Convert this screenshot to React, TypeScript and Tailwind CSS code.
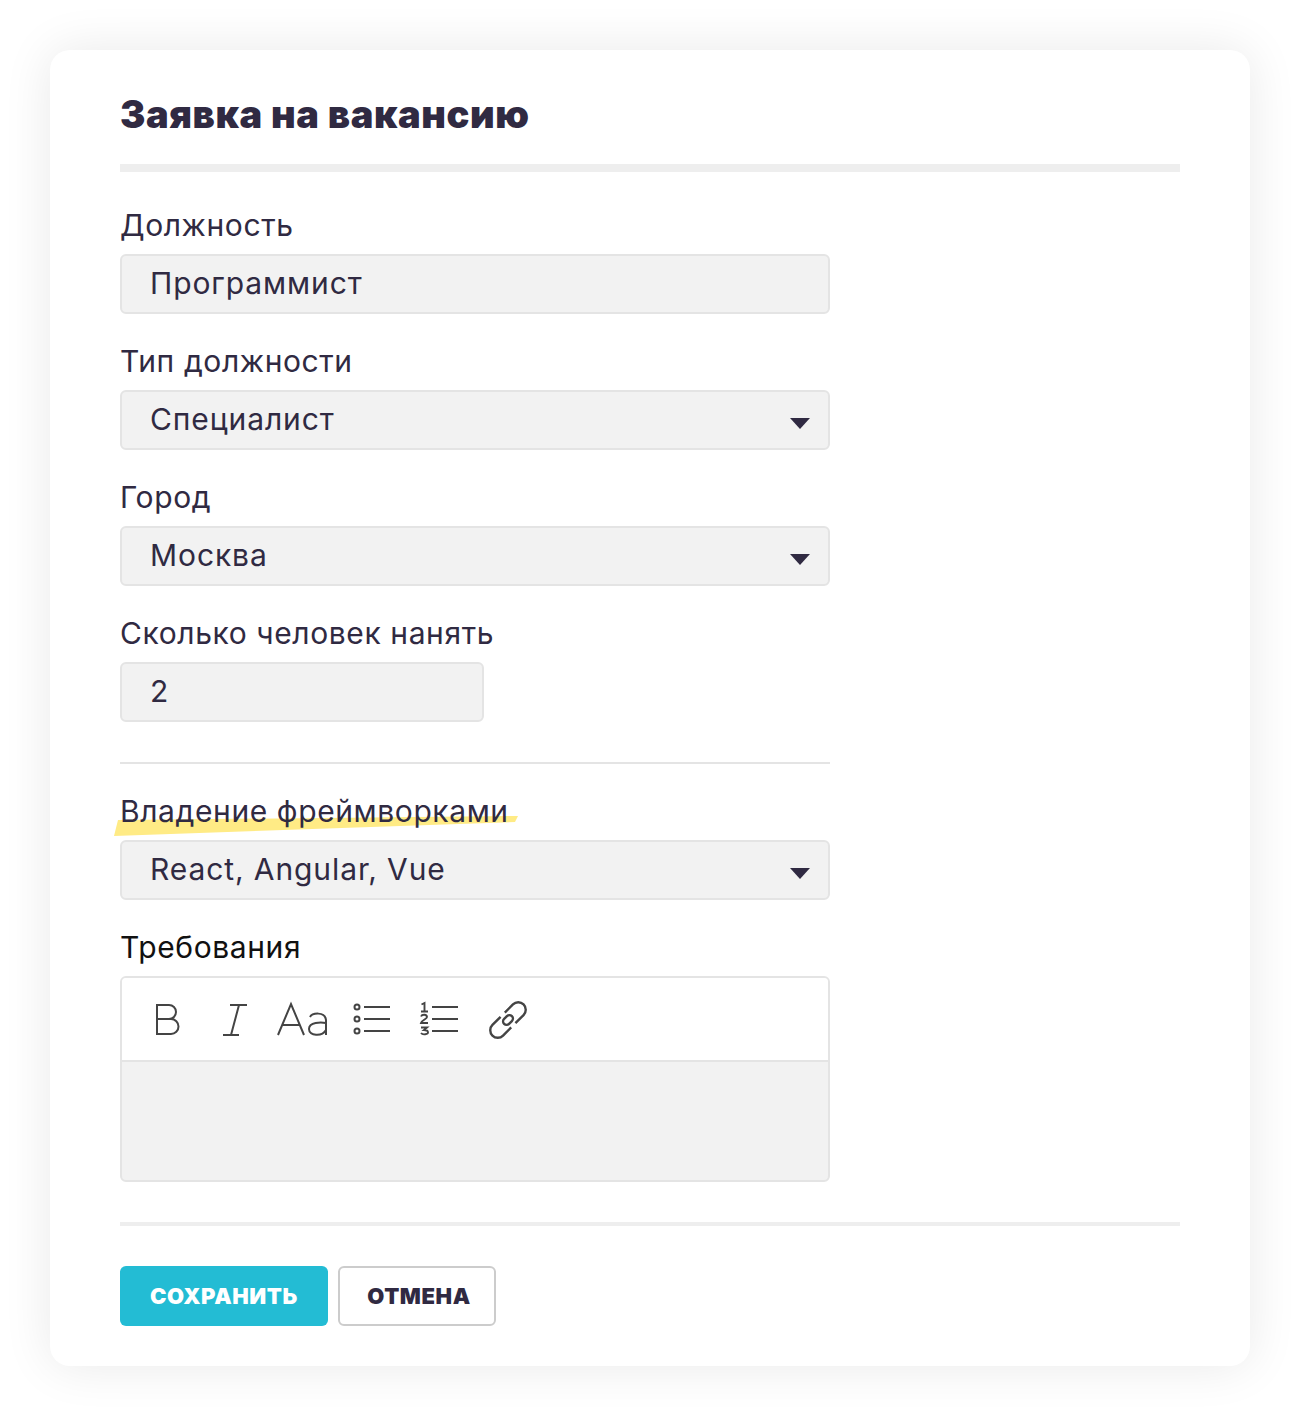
const INK = "text-[#302a42]";

function Caret() {
  return (
    <svg viewBox="0 0 20 11" className="mt-[8px] h-[11px] w-[20px] fill-[#302a42]" aria-hidden="true">
      <path d="M0 0h20L10 11z" />
    </svg>
  );
}

function Field({
  label,
  value,
  select,
  narrow,
}: {
  label: string;
  value: string;
  select?: boolean;
  narrow?: boolean;
}) {
  return (
    <div className="mb-[12px]">
      <div className={`h-[64px] pt-[15px] text-[30px] leading-[40px] tracking-[0.6px] ${INK}`}>{label}</div>
      <div
        className={`flex h-[60px] items-center justify-between rounded-[6px] border-2 border-[#e4e4e4] bg-[#f2f2f2] pb-[2px] pl-[28px] pr-[18px] text-[30px] tracking-[0.9px] ${INK} ${
          narrow ? "w-[364px]" : "w-[710px]"
        }`}
      >
        <span>{value}</span>
        {select && <Caret />}
      </div>
    </div>
  );
}

function EditorIcon({ w, x, children }: { w: number; x: number; children: React.ReactNode }) {
  return (
    <svg
      viewBox={`${x} 1000 ${w} 40`}
      width={w}
      height={40}
      fill="none"
      stroke="#444"
      strokeWidth="2"
      aria-hidden="true"
    >
      {children}
    </svg>
  );
}

function Toolbar() {
  return (
    <div className="flex h-[84px] items-center border-b-2 border-[#e4e4e4] bg-white pl-[28px] pt-[2px]">
      <EditorIcon x={150} w={36}>
        <path d="M157 1005h12a7 7 0 0 1 0 14h-12zM157 1019h14a7.5 7.5 0 0 1 0 15h-14z" />
      </EditorIcon>
      <div className="ml-[32px]">
        <EditorIcon x={218} w={32}>
          <path d="M230 1005h17M223 1035h16M239 1005l-8 30" />
        </EditorIcon>
      </div>
      <div className="ml-[26px]">
        <EditorIcon x={276} w={54}>
          <path d="M278 1035l13-31 13 31M282 1025h18" />
          <path d="M310 1017c2-4 15-6 16 3v15M326 1023c-5-1-17-1-17 6s13 8 17 1" />
        </EditorIcon>
      </div>
      <div className="ml-[22px]">
        <EditorIcon x={352} w={40}>
          <circle cx="357" cy="1007" r="2.5" />
          <circle cx="357" cy="1019" r="2.5" />
          <circle cx="357" cy="1031" r="2.5" />
          <path d="M364 1007h26M364 1019h26M364 1031h26" />
        </EditorIcon>
      </div>
      <div className="ml-[26px]">
        <EditorIcon x={418} w={42}>
          <path d="M432 1007h26M432 1019h26M432 1031h26" />
          <path strokeWidth="1.9" d="M421.5 1004.5l3-1.5v8.5M421 1011.5h7" />
          <path strokeWidth="1.9" d="M421 1016.5c1-2.5 6-2.5 6 .5 0 2-5 3-6 6h7" />
          <path strokeWidth="1.9" d="M421 1027.5h6l-3 2.5c3 0 4 1 4 2.5s-5 3-7 .5" />
        </EditorIcon>
      </div>
      <div className="ml-[28px]">
        <EditorIcon x={488} w={40}>
          <g transform="translate(508 1020) rotate(-45)" strokeWidth="2.4">
            <path d="M-3-7.5H-14.5a7.5 7.5 0 0 0 0 15H-3" />
            <path d="M3-7.5H14.5a7.5 7.5 0 0 1 0 15H3" />
            <rect x="-5.5" y="-3.5" width="11" height="7" rx="3.5" />
          </g>
        </EditorIcon>
      </div>
    </div>
  );
}

export default function App() {
  return (
    <div className="bg-white p-[50px] font-['Inter','Liberation_Sans',sans-serif]">
      <div className="h-[1316px] rounded-[20px] bg-white px-[70px] shadow-[0_0_50px_rgba(0,0,0,0.09)]">
        <h1 className={`flex h-[114px] items-center pt-[14px] text-[38px] font-black tracking-[0.6px] ${INK}`}>
          Заявка на вакансию
        </h1>
        <div className="h-[8px] bg-[#eeeeee]" />

        <div className="mt-[18px]">
          <Field label="Должность" value="Программист" />
          <Field label="Тип должности" value="Специалист" select />
          <Field label="Город" value="Москва" select />
          <Field label="Сколько человек нанять" value="2" narrow />
        </div>

        <div className="mt-[40px] h-[2px] w-[710px] bg-[#e4e4e4]" />

        <div className="relative mt-[12px]">
          <svg
            viewBox="0 0 404 20"
            className="absolute left-[-6px] top-[40px] h-[20px] w-[404px] fill-[#ffeb85]"
            aria-hidden="true"
          >
            <path d="M4 4L404 0l-3 6L0 20z" />
          </svg>
          <div className="relative">
            <Field label="Владение фреймворками" value="React, Angular, Vue" select />
          </div>
        </div>

        <div className="h-[64px] pt-[15px] text-[30px] leading-[40px] tracking-[0.6px] text-[#111]">Требования</div>
        <div className="h-[206px] w-[710px] overflow-hidden rounded-[6px] border-2 border-[#e4e4e4] bg-[#f2f2f2]">
          <Toolbar />
        </div>

        <div className="mt-[40px] h-[4px] bg-[#eeeeee]" />

        <div className="mt-[40px] flex gap-[10px]">
          <button className="h-[60px] w-[208px] rounded-[6px] bg-[#23bcd4] text-[22px] font-black tracking-[0.6px] text-white">
            СОХРАНИТЬ
          </button>
          <button className={`h-[60px] w-[158px] rounded-[6px] border-2 border-[#cccccc] bg-white pl-[4px] text-[22px] font-black tracking-[0.6px] ${INK}`}>
            ОТМЕНА
          </button>
        </div>
      </div>
    </div>
  );
}
